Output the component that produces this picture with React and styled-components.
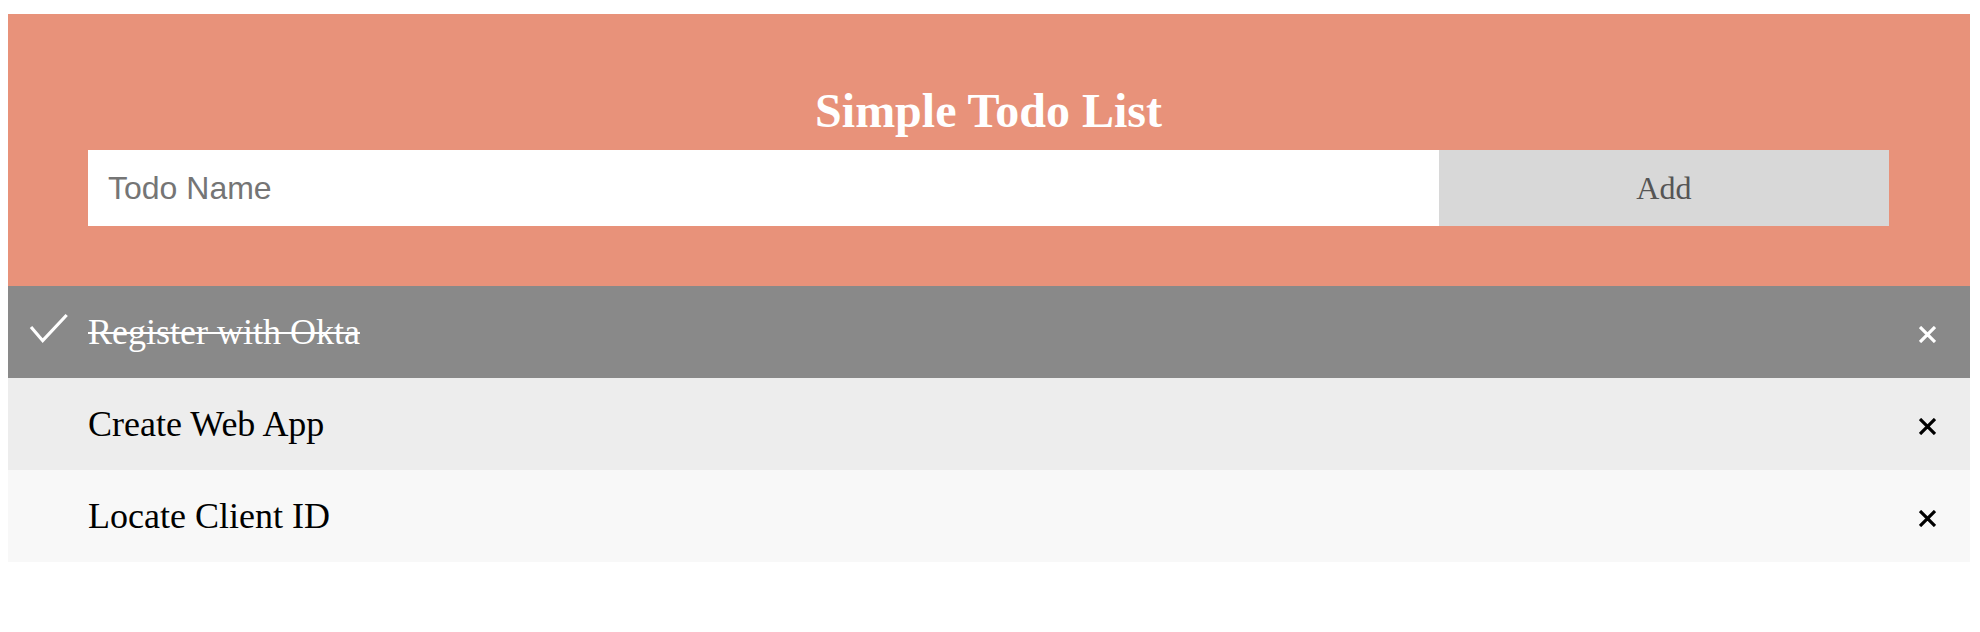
import React, { useState } from 'react';
import styled, { createGlobalStyle } from 'styled-components';

const GlobalStyle = createGlobalStyle`
  body {
    margin: 0;
    background: #fff;
    font-family: 'Liberation Serif', 'Times New Roman', serif;
  }
`;

const Page = styled.div`
  padding: 14px 10px 0 8px;
`;

const Header = styled.header`
  background: #e8927a;
  padding: 69px 81px 60px 80px;
`;

const Title = styled.h1`
  margin: 0 0 11px;
  font-size: 48px;
  line-height: 56px;
  font-weight: bold;
  color: #fff;
  text-align: center;
`;

const Form = styled.form`
  display: flex;
  height: 76px;
`;

const TodoInput = styled.input`
  flex: 0 0 75%;
  box-sizing: border-box;
  border: none;
  outline: none;
  padding: 0 20px;
  font-family: 'Liberation Sans', Arial, sans-serif;
  font-size: 32px;
  color: #333;
  background: #fff;

  &::placeholder {
    color: #757575;
  }
`;

const AddButton = styled.button`
  flex: 1;
  border: none;
  background: #d8d8d8;
  color: #555;
  font-family: 'Liberation Serif', 'Times New Roman', serif;
  font-size: 32px;
  cursor: pointer;
`;

const List = styled.ul`
  list-style: none;
  margin: 0;
  padding: 0;
`;

const Item = styled.li`
  display: flex;
  align-items: center;
  height: 92px;
  background: ${(p) => (p.$done ? '#898989' : p.$odd ? '#f8f8f8' : '#ededed')};
  color: ${(p) => (p.$done ? '#fff' : '#000')};
  cursor: pointer;
`;

const CheckSlot = styled.span`
  display: flex;
  align-items: center;
  width: 80px;
  height: 40px;
  padding-left: 21px;
  box-sizing: border-box;
`;

const Label = styled.span`
  flex: 1;
  font-size: 36px;
  text-decoration: ${(p) => (p.$done ? 'line-through' : 'none')};
  text-decoration-thickness: 2px;
`;

const Remove = styled.button`
  display: flex;
  border: none;
  background: none;
  padding: 4px 34px 0 0;
  cursor: pointer;
  color: inherit;
`;

const CheckIcon = () => (
  <svg width="40" height="40" viewBox="0 0 40 40">
    <polyline
      points="2,15 13.7,28.7 37.7,3"
      fill="none"
      stroke="#fff"
      strokeWidth="3.2"
    />
  </svg>
);

const CloseIcon = () => (
  <svg width="17" height="17" viewBox="0 0 17 17">
    <path d="M1 1L16 16M16 1L1 16" stroke="currentColor" strokeWidth="3.2" />
  </svg>
);

const initialTodos = [
  { id: 1, name: 'Register with Okta', done: true },
  { id: 2, name: 'Create Web App', done: false },
  { id: 3, name: 'Locate Client ID', done: false },
];

const App = () => {
  const [todos, setTodos] = useState(initialTodos);
  const [name, setName] = useState('');

  const addTodo = (e) => {
    e.preventDefault();
    if (!name.trim()) return;
    setTodos([...todos, { id: Date.now(), name, done: false }]);
    setName('');
  };

  const toggle = (id) =>
    setTodos(todos.map((t) => (t.id === id ? { ...t, done: !t.done } : t)));

  const remove = (id) => setTodos(todos.filter((t) => t.id !== id));

  return (
    <Page>
      <GlobalStyle />
      <Header>
        <Title>Simple Todo List</Title>
        <Form onSubmit={addTodo}>
          <TodoInput
            placeholder="Todo Name"
            value={name}
            onChange={(e) => setName(e.target.value)}
          />
          <AddButton type="submit">Add</AddButton>
        </Form>
      </Header>

      <List>
        {todos.map((todo, i) => (
          <Item
            key={todo.id}
            $done={todo.done}
            $odd={i % 2 === 0}
            onClick={() => toggle(todo.id)}
          >
            <CheckSlot>{todo.done && <CheckIcon />}</CheckSlot>
            <Label $done={todo.done}>{todo.name}</Label>
            <Remove
              onClick={(e) => {
                e.stopPropagation();
                remove(todo.id);
              }}
            >
              <CloseIcon />
            </Remove>
          </Item>
        ))}
      </List>
    </Page>
  );
};

export default App;
